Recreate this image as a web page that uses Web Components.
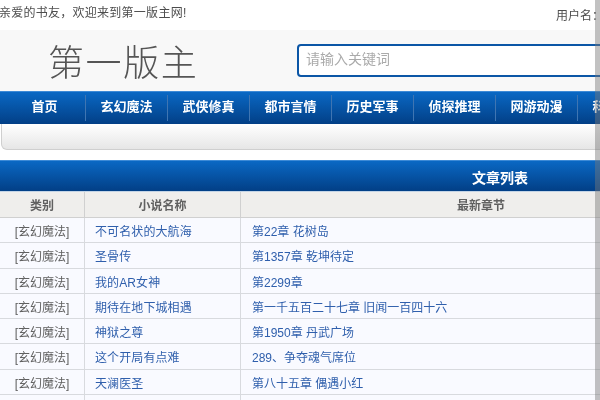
<!DOCTYPE html>
<html>
<head>
<meta charset="utf-8">
<style>
  html, body { margin: 0; height: 400px; overflow: hidden; background: #fff; }
  body { font: 12px "Liberation Sans", "Noto Sans CJK SC", sans-serif; color: #555; width: 1000px; filter: blur(.35px); }
</style>
</head>
<body>
<site-topbar></site-topbar>
<site-logo></site-logo>
<site-nav></site-nav>
<sub-bar></sub-bar>
<article-list>
    <article-row name="不可名状的大航海" chapter="第22章 花树岛"></article-row>
    <article-row name="圣骨传" chapter="第1357章 乾坤待定"></article-row>
    <article-row name="我的AR女神" chapter="第2299章"></article-row>
    <article-row name="期待在地下城相遇" chapter="第一千五百二十七章 旧闻一百四十六"></article-row>
    <article-row name="神狱之尊" chapter="第1950章 丹武广场"></article-row>
    <article-row name="这个开局有点难" chapter="289、争夺魂气席位"></article-row>
    <article-row name="天澜医圣" chapter="第八十五章 偶遇小红"></article-row>
    <article-row></article-row>
</article-list>
<page-scrollbar></page-scrollbar>

<script>
class SiteTopbar extends HTMLElement {
    constructor() {
        super();
        this.attachShadow({ mode: 'open' });
        this.shadowRoot.innerHTML = `
            <style>
                :host { display: flex; height: 30px; width: 600px; justify-content: space-between; color: #4d4d4d; }
                .hi { padding: 3px 0 0 0; margin-left: -1px; letter-spacing: .26px; }
                .user { padding: 6px 0 0 0; margin-right: -4px; white-space: nowrap; width: 48px; overflow: hidden; }
            </style>
            <div class="hi">亲爱的书友，欢迎来到第一版主网!</div>
            <div class="user">用户名：</div>
        `;
    }
}

class SiteLogo extends HTMLElement {
    constructor() {
        super();
        this.attachShadow({ mode: 'open' });
        this.shadowRoot.innerHTML = `
            <style>
                :host { display: flex; align-items: center; height: 61px; background: #f8f8f8; width: 1000px; box-sizing: border-box; }
                .logo { width: 297px; box-sizing: border-box; padding: 0 0 2px 48px; font-size: 36px; letter-spacing: 1.6px; font-weight: 300; color: #555; font-family: "Noto Sans CJK SC", sans-serif; line-height: 1; }
                .search { width: 400px; height: 33px; box-sizing: border-box; border: 2px solid #0b56a6; border-radius: 4px; background: #fff; color: #aaa; font-size: 14px; line-height: 27px; padding-left: 7px; }
            </style>
            <div class="logo">第一版主</div>
            <div class="search">请输入关键词</div>
        `;
    }
}

class SiteNav extends HTMLElement {
    constructor() {
        super();
        this.attachShadow({ mode: 'open' });
        const items = ['首页', '玄幻魔法', '武侠修真', '都市言情', '历史军事', '侦探推理', '网游动漫', '科幻小说'];
        this.shadowRoot.innerHTML = `
            <style>
                :host { display: flex; height: 33px; padding-left: 4px; width: 1000px; box-sizing: border-box; background: linear-gradient(#0a68c4, #023f86); border-top: 1px solid #3d8ad6; }
                a { width: 82px; flex: none; box-sizing: border-box; color: #fff; font-weight: bold; font-size: 13px; line-height: 24px; text-align: center; border-right: 1px solid #3f75b2; margin: 3px 0; height: 26px; }
            </style>
            ${items.map(t => `<a>${t}</a>`).join('')}
        `;
    }
}

class SubBar extends HTMLElement {
    constructor() {
        super();
        this.attachShadow({ mode: 'open' });
        this.shadowRoot.innerHTML = `
            <style>
                :host { display: block; width: 998px; margin-left: 1px; height: 26px; box-sizing: border-box; background: linear-gradient(#fff, #e6e6e6); border: 1px solid #cfcfcf; border-top: none; border-radius: 0 0 6px 6px; margin-bottom: 10px; }
            </style>
        `;
    }
}

class ArticleRow extends HTMLElement {
    constructor() {
        super();
        this.attachShadow({ mode: 'open' });
    }

    connectedCallback() {
        const name = this.getAttribute('name') || '';
        const chapter = this.getAttribute('chapter') || '';
        this.shadowRoot.innerHTML = `
            <style>
                :host { display: grid; grid-template-columns: 85px 156px 481px 1fr; height: 25.25px; line-height: 29px; background: #f9faff; border-bottom: 1px solid #d8dade; box-sizing: border-box; }
                div { border-right: 1px solid #d8dade; overflow: hidden; white-space: nowrap; }
                .type { text-align: center; color: #606060; }
                .link { color: #2f5fac; }
                .name { padding-left: 10px; letter-spacing: .1px; }
                .chapter { padding-left: 11px; }
            </style>
            <div class="type">${name ? '[玄幻魔法]' : ''}</div>
            <div class="link name">${name}</div>
            <div class="link chapter">${chapter}</div>
            <div></div>
        `;
    }
}

class ArticleList extends HTMLElement {
    constructor() {
        super();
        this.attachShadow({ mode: 'open' });
        this.shadowRoot.innerHTML = `
            <style>
                :host { display: block; width: 1000px; }
                .title { height: 31px; box-sizing: border-box; background: linear-gradient(#0a68c4, #023f86); border-top: 1px solid #3d8ad6; color: #fff; font-weight: bold; font-size: 14px; line-height: 35px; text-align: center; }
                .head { display: grid; grid-template-columns: 85px 156px 481px 1fr; height: 27px; box-sizing: border-box; background: #efeeec; border-top: 1px solid #c3d4e6; border-bottom: 1px solid #d0d0d0; color: #606060; font-weight: bold; line-height: 29px; text-align: center; }
                .head div { border-right: 1px solid #d0d0d0; }
            </style>
            <div class="title">文章列表</div>
            <div class="head"><div>类别</div><div>小说名称</div><div>最新章节</div><div></div></div>
            <slot></slot>
        `;
    }
}

class PageScrollbar extends HTMLElement {
    constructor() {
        super();
        this.attachShadow({ mode: 'open' });
        this.shadowRoot.innerHTML = `
            <style>
                :host { display: block; position: fixed; top: 0; left: 595px; width: 5px; height: 400px; background: rgba(120,120,120,.45); }
            </style>
        `;
    }
}

customElements.define('article-row', ArticleRow);
customElements.define('site-topbar', SiteTopbar);
customElements.define('site-logo', SiteLogo);
customElements.define('site-nav', SiteNav);
customElements.define('sub-bar', SubBar);
customElements.define('article-list', ArticleList);
customElements.define('page-scrollbar', PageScrollbar);
</script>
</body>
</html>
